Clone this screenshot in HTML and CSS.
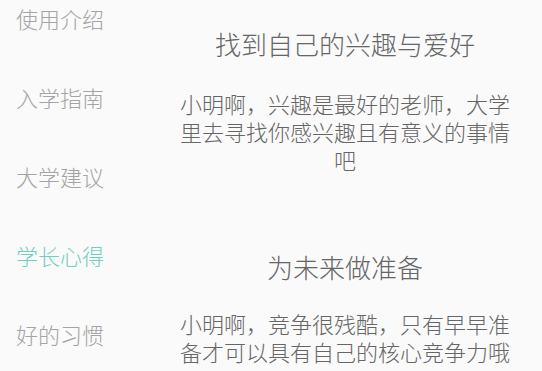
FILE: index.html
```html
<!DOCTYPE html>
<html lang="zh-CN">
<head>
<meta charset="utf-8">
<title>大学指南</title>
<link rel="stylesheet" href="styles.css">
</head>
<body>
<div class="page">
  <nav class="menu">
    <div class="item">使用介绍</div>
    <div class="item">入学指南</div>
    <div class="item">大学建议</div>
    <div class="item active">学长心得</div>
    <div class="item">好的习惯</div>
  </nav>
  <main class="content">
    <section class="card">
      <h2 class="title">找到自己的兴趣与爱好</h2>
      <p class="text">小明啊，兴趣是最好的老师，大学里去寻找你感兴趣且有意义的事情吧</p>
    </section>
    <section class="card second">
      <h2 class="title">为未来做准备</h2>
      <p class="text">小明啊，竞争很残酷，只有早早准备才可以具有自己的核心竞争力哦</p>
    </section>
  </main>
</div>
</body>
</html>
```
FILE: styles.css
```css
html, body {
  margin: 0;
  padding: 0;
  background: #fafafa;
}
body {
  font-family: "Noto Sans CJK SC", "Noto Sans", sans-serif;
  font-weight: 300;
  width: 542px;
  height: 371px;
  overflow: hidden;
}
.page {
  display: flex;
}
.menu {
  width: 148px;
  flex: none;
  padding-left: 16px;
  box-sizing: border-box;
}
.item {
  font-size: 22px;
  line-height: 28px;
  height: 79px;
  padding-top: 4px;
  box-sizing: border-box;
  color: #a4a4a4;
}
.item.active {
  color: #6dcfc0;
}
.content {
  flex: 1;
  padding: 0 28px;
}
.card {
  text-align: center;
}
.title {
  margin: 0;
  padding-top: 26px;
  font-size: 26px;
  line-height: 36px;
  font-weight: 300;
  color: #666;
}
.text {
  margin: 27px 0 0;
  font-size: 22px;
  line-height: 28px;
  color: #666;
}
.second .title {
  padding-top: 76px;
}
.second .text {
  margin-top: 24px;
}
```
